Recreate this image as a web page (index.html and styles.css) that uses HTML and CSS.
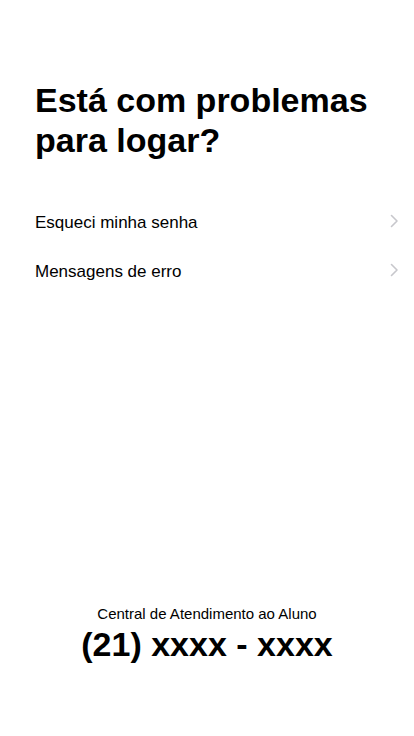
FILE: index.html
```html
<!DOCTYPE html>
<html lang="pt-BR">
<head>
<meta charset="utf-8">
<title>Está com problemas para logar?</title>
<link rel="stylesheet" href="styles.css">
</head>
<body>
<main class="screen">
  <h1 class="title">Está com problemas para logar?</h1>
  <ul class="options">
    <li class="option">
      <span class="option-label">Esqueci minha senha</span>
      <svg class="chevron" width="9" height="14" viewBox="0 0 9 14" aria-hidden="true"><path d="M1.5 1.5 L7 7 L1.5 12.5" fill="none" stroke="#c7c7cc" stroke-width="1.6" stroke-linecap="round" stroke-linejoin="round"/></svg>
    </li>
    <li class="option">
      <span class="option-label">Mensagens de erro</span>
      <svg class="chevron" width="9" height="14" viewBox="0 0 9 14" aria-hidden="true"><path d="M1.5 1.5 L7 7 L1.5 12.5" fill="none" stroke="#c7c7cc" stroke-width="1.6" stroke-linecap="round" stroke-linejoin="round"/></svg>
    </li>
  </ul>
  <footer class="contact">
    <p class="contact-label">Central de Atendimento ao Aluno</p>
    <p class="contact-phone">(21) xxxx - xxxx</p>
  </footer>
</main>
</body>
</html>
```

FILE: styles.css
```css
* {
  box-sizing: border-box;
}

html, body {
  margin: 0;
  padding: 0;
  background: #ffffff;
}

body {
  font-family: "Liberation Sans", Arial, sans-serif;
  color: #000000;
}

.screen {
  height: 736px;
  display: flex;
  flex-direction: column;
}

.title {
  margin: 80px 0 0 0;
  padding: 0 40px 0 35px;
  font-size: 34px;
  line-height: 40px;
  font-weight: bold;
}

.options {
  list-style: none;
  margin: 38px 0 0 0;
  padding: 0;
}

.option {
  height: 49px;
  display: flex;
  align-items: center;
  justify-content: space-between;
  padding: 0 15px 0 35px;
}

.option-label {
  font-size: 17px;
  line-height: 20px;
}

.chevron {
  display: block;
  margin-top: -4px;
}

.contact {
  margin-top: auto;
  padding-bottom: 73px;
  text-align: center;
}

.contact-label {
  margin: 0;
  font-size: 15px;
  line-height: 18px;
}

.contact-phone {
  margin: 2px 0 0 0;
  font-size: 34px;
  line-height: 38px;
  font-weight: bold;
}
```
